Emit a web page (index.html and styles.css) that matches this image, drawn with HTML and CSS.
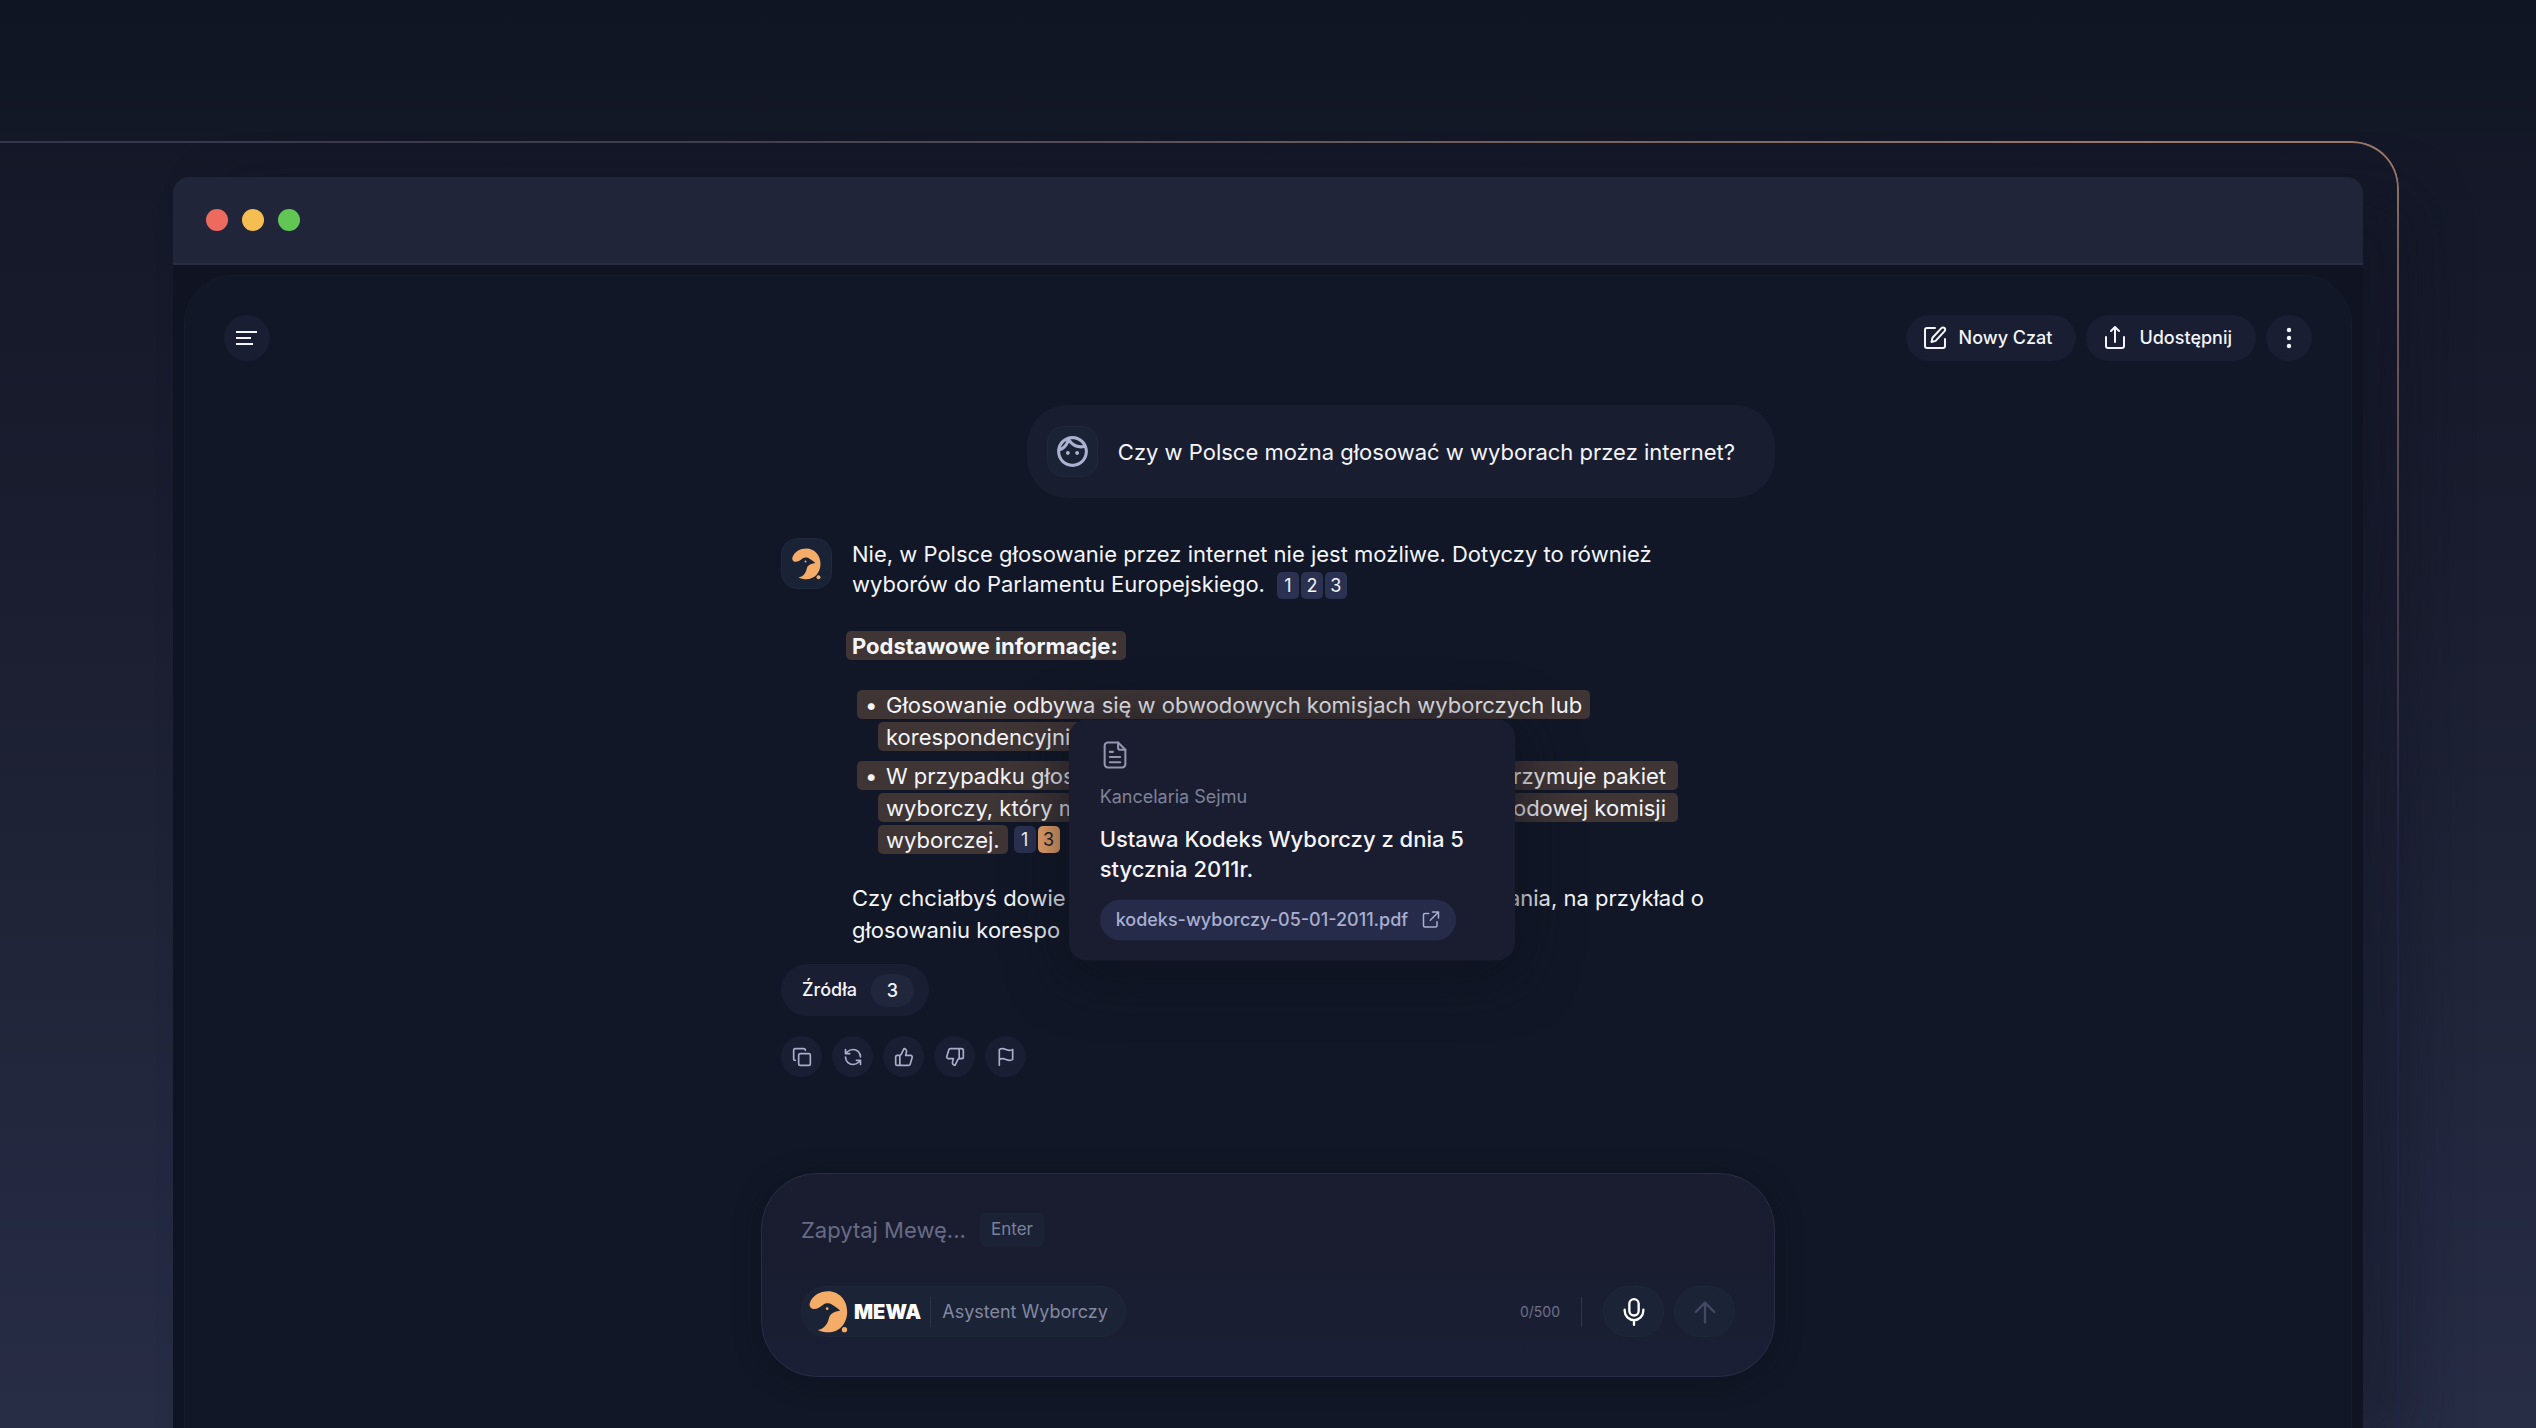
FILE: index.html
```html
<!DOCTYPE html>
<html lang="pl">
<head>
  <meta charset="UTF-8">
  <meta name="viewport" content="width=device-width, initial-scale=1">
  <title>MEWA - Asystent Wyborczy</title>
  <link rel="stylesheet" href="styles.css">
</head>
<body>

<!-- shared logo shape -->
<svg class="defs" aria-hidden="true">
  <symbol id="mewa" viewBox="148 62 116 126">
    <path d="M160 116C152 115 147 106 150 98C158 76 180 63 205 63C238 63 262 90 262 124C262 160 238 186 205 186C194 186 183 184 174 179C192 176 202 162 206 148C209 134 214 125 241 121C233 112 224 108 218 104C212 98 198 97 190 103C181 110 172 117 160 116Z"/>
    <circle cx="202" cy="115" r="4"/>
    <circle cx="254" cy="178" r="8"/>
  </symbol>
</svg>

<div class="frame"></div>

<div class="window">
  <div class="titlebar">
    <span class="dot red"></span>
    <span class="dot yellow"></span>
    <span class="dot green"></span>
  </div>

  <div class="panel">
    <header class="toolbar">
      <button class="round" aria-label="Menu">
        <svg class="menu-icon" viewBox="0 0 22 16"><path d="M0 2h21M0 8h15M0 14h17"/></svg>
      </button>
      <div class="toolbar-right">
        <button class="pill">
          <svg class="icon" viewBox="0 0 24 24"><path d="M12 2H4a2 2 0 0 0-2 2v16a2 2 0 0 0 2 2h16a2 2 0 0 0 2-2v-7"/><path d="M18.4 2.100a2.100 2.100 0 0 1 3.200 3L12.600 14.900 8.500 16l1-4.200z"/></svg>
          Nowy Czat
        </button>
        <button class="pill">
          <svg class="icon" viewBox="0 0 24 24"><path d="M3 11v9a2 2 0 0 0 2 2h14a2 2 0 0 0 2-2v-9"/><path d="M8 5l4-4 4 4M12 1v15"/></svg>
          Udostępnij
        </button>
        <button class="round" aria-label="Więcej">
          <svg class="icon filled" viewBox="0 0 24 24"><circle cx="12" cy="4" r="2.2"/><circle cx="12" cy="12" r="2.2"/><circle cx="12" cy="20" r="2.2"/></svg>
        </button>
      </div>
    </header>

    <main class="chat">
      <div class="question">
        <div class="avatar">
          <svg class="face" viewBox="0 0 24 24"><path d="M10.25 13c0 .69-.56 1.25-1.25 1.25S7.75 13.69 7.75 13s.56-1.25 1.25-1.25 1.25.56 1.25 1.25zM15 11.75c-.69 0-1.25.56-1.25 1.25s.56 1.25 1.25 1.25 1.25-.56 1.25-1.25-.56-1.25-1.25-1.25zm7 .25c0 5.52-4.48 10-10 10S2 17.52 2 12 6.48 2 12 2s10 4.48 10 10zM10.66 4.12C12.06 6.44 14.6 8 17.5 8c.46 0 .91-.05 1.34-.12C17.44 5.56 14.9 4 12 4c-.46 0-.91.05-1.34.12zM4.42 9.47c1.71-.97 3.03-2.55 3.66-4.44C6.37 6 5.05 7.58 4.42 9.47zM20 12c0-.78-.12-1.53-.33-2.24-.7.15-1.42.24-2.17.24-3.13 0-5.92-1.44-7.76-3.69C8.69 8.87 6.6 10.88 4 11.86c.01.04 0 .09 0 .14 0 4.41 3.59 8 8 8s8-3.59 8-8z"/></svg>
        </div>
        <p>Czy w Polsce można głosować w wyborach przez internet?</p>
      </div>

      <div class="answer">
        <div class="avatar">
          <svg class="bird"><use href="#mewa"/></svg>
        </div>
        <div class="answer-text">
          <p>Nie, w Polsce głosowanie przez internet nie jest możliwe. Dotyczy to również<br>
            wyborów do Parlamentu Europejskiego.<span class="refs"><button class="ref">1</button><button class="ref">2</button><button class="ref">3</button></span></p>

          <h2 class="mark">Podstawowe informacje:</h2>

          <ul>
            <li>
              <span class="mark first">Głosowanie odbywa się w obwodowych komisjach wyborczych lub</span>
              <span class="mark">korespondencyjnie.</span>
            </li>
            <li>
              <span class="mark first wide"><span>W przypadku głos</span> <span>otrzymuje pakiet</span></span>
              <span class="mark wide"><span>wyborczy, który m</span> <span>obwodowej komisji</span></span>
              <span class="last">
                <span class="mark">wyborczej.</span>
                <span class="refs">
                  <button class="ref">1</button>
                  <span class="ref-open">
                    <button class="ref active">3</button>
                    <span class="source">
                      <svg class="file-icon" viewBox="0 0 24 28"><path d="M15 2H5a3 3 0 0 0-3 3v18a3 3 0 0 0 3 3h14a3 3 0 0 0 3-3V9z"/><path d="M15 2v5a2 2 0 0 0 2 2h5M7 11h3M7 16h10M7 21h10"/></svg>
                      <span class="source-owner">Kancelaria Sejmu</span>
                      <strong>Ustawa Kodeks Wyborczy z dnia 5 stycznia 2011r.</strong>
                      <a class="source-link" href="#">kodeks-wyborczy-05-01-2011.pdf
                        <svg class="link-icon" viewBox="0 0 24 24"><path d="M14 2h8v8M22 2L11 13"/><path d="M9 4H4a2 2 0 0 0-2 2v14a2 2 0 0 0 2 2h14a2 2 0 0 0 2-2v-5"/></svg>
                      </a>
                    </span>
                  </span>
                </span>
              </span>
            </li>
          </ul>

          <p class="follow-up"><span class="wide"><span>Czy chciałbyś dowie</span> <span>głosowania, na przykład o</span></span>
            głosowaniu korespo</p>
        </div>
      </div>

      <button class="sources">Źródła <span>3</span></button>

      <div class="actions">
        <button aria-label="Kopiuj"><svg class="icon small" viewBox="0 0 24 24"><rect x="8" y="8" width="14" height="14" rx="2"/><path d="M4 16a2 2 0 0 1-2-2V4a2 2 0 0 1 2-2h10a2 2 0 0 1 2 2"/></svg></button>
        <button aria-label="Odśwież"><svg class="icon small" viewBox="0 0 24 24"><path d="M21 12a9 9 0 0 0-9-9 9.8 9.8 0 0 0-6.7 2.7L3 8M3 3v5h5M3 12a9 9 0 0 0 9 9 9.8 9.8 0 0 0 6.7-2.7L21 16M16 16h5v5"/></svg></button>
        <button aria-label="Dobra odpowiedź"><svg class="icon small" viewBox="0 0 24 24"><path d="M7 10v12M15 5.9 14 10h5.8a2 2 0 0 1 2 2.6l-2.4 8a2 2 0 0 1-1.9 1.4H4a2 2 0 0 1-2-2v-8a2 2 0 0 1 2-2h2.8a2 2 0 0 0 1.8-1.1L12 2a3.1 3.1 0 0 1 3 3.9z"/></svg></button>
        <button aria-label="Zła odpowiedź"><svg class="icon small" viewBox="0 0 24 24"><path d="M17 14V2M9 18.1 10 14H4.2a2 2 0 0 1-2-2.6l2.4-8A2 2 0 0 1 6.5 2H20a2 2 0 0 1 2 2v8a2 2 0 0 1-2 2h-2.8a2 2 0 0 0-1.8 1.1L12 22a3.1 3.1 0 0 1-3-3.9z"/></svg></button>
        <button aria-label="Zgłoś"><svg class="icon small" viewBox="0 0 24 24"><path d="M4 22V3s1-1 4-1 5 2 8 2 4-1 4-1v12s-1 1-4 1-5-2-8-2-4 1-4 1"/></svg></button>
      </div>

      <form class="composer" onsubmit="return false">
        <div class="composer-row">
          <input type="text" placeholder="Zapytaj Mewę..." aria-label="Zapytaj Mewę">
          <kbd>Enter</kbd>
        </div>
        <div class="composer-row">
          <div class="brand">
            <svg class="brand-bird"><use href="#mewa"/></svg>
            <b>MEWA</b>
            <span>Asystent Wyborczy</span>
          </div>
          <span class="counter">0/500</span>
          <button class="mic" type="button" aria-label="Dyktuj">
            <svg class="icon large" viewBox="0 0 24 24"><rect x="8" y="1" width="8" height="14" rx="4"/><path d="M4 10v1a8 8 0 0 0 16 0v-1M12 19v4"/></svg>
          </button>
          <button class="send" type="submit" aria-label="Wyślij" disabled>
            <svg class="icon large" viewBox="0 0 24 24"><path d="M12 21V4M4 12l8-8 8 8"/></svg>
          </button>
        </div>
      </form>
    </main>
  </div>
</div>

</body>
</html>
```
FILE: styles.css
```css
* {
  box-sizing: border-box;
}
body {
  font-family: Inter, "Open Sans", sans-serif;
  font-size: 22px;
  line-height: 30px;
  color: #f4f5fa;
  margin: 0;
  padding: 177px 173px 0;
  display: flex;
  flex-direction: column;
  min-height: 100vh;
  position: relative;
  overflow-x: hidden;
  background: linear-gradient(#0f1522, #141828 12%, #1a1d2f 38%, #1f2437 64%, #232840 82%, #272d45);
}
p, h2, ul {
  margin: 0;
  padding: 0;
}
button {
  font: inherit;
  color: inherit;
  border: none;
  padding: 0;
  cursor: pointer;
}
svg {
  display: block;
  flex: none;
  fill: none;
  stroke: currentColor;
  stroke-width: 2;
  stroke-linecap: round;
  stroke-linejoin: round;
}
.defs {
  position: absolute;
  width: 0;
  height: 0;
}
.icon {
  width: 24px;
  height: 24px;
}
.icon.small {
  width: 20px;
  height: 20px;
}
.icon.large {
  width: 28px;
  height: 28px;
}
.filled, .face, .bird, .brand-bird {
  fill: currentColor;
  stroke: none;
}

/* glowing line behind the window */
.frame {
  position: absolute;
  top: 141px;
  left: 0;
  right: 137px;
  bottom: 0;
  padding: 2px 2px 0 0;
  border-radius: 0 47px 0 0;
  background:
    linear-gradient(transparent 10%, #262c50 55%, #262d52),
    linear-gradient(to right, #33354a, #41404f 30%, #9c7a6b 90%);
  mask: linear-gradient(#000 0 0) content-box exclude, linear-gradient(#000 0 0);
}

.window {
  flex: 1;
  display: flex;
  flex-direction: column;
  position: relative;
  background: #101422;
  border-radius: 16px 16px 0 0;
  box-shadow: 48px 20px 60px rgba(16, 18, 32, 0.4);
}
.titlebar {
  display: flex;
  align-items: center;
  gap: 14px;
  height: 88px;
  padding-left: 33px;
  background: #202539;
  border-bottom: 2px solid #282d41;
  border-radius: 16px 16px 0 0;
}
.dot {
  width: 22px;
  height: 22px;
  border-radius: 50%;
}
.red { background: #ed6a5f; }
.yellow { background: #f6be50; }
.green { background: #62c655; }

.panel {
  flex: 1;
  margin: 10px 11px 0;
  padding: 39px 39px 51px;
  background: #111726;
  border: 1px solid #161c2b;
  border-bottom: none;
  border-radius: 50px 50px 0 0;
}
.toolbar, .toolbar-right {
  display: flex;
  justify-content: space-between;
  gap: 10px;
}
.round, .pill {
  display: flex;
  align-items: center;
  justify-content: center;
  height: 46px;
  background: #191e33;
  border-radius: 23px;
}
.round {
  width: 46px;
}
.pill {
  gap: 12px;
  padding: 0 24px 0 17px;
  font-size: 18px;
  font-weight: 500;
}
.menu-icon {
  width: 22px;
  height: 16px;
  stroke-linecap: butt;
}

.chat {
  display: flex;
  flex-direction: column;
  align-items: flex-start;
  max-width: 1014px;
  margin: 44px auto 0;
}
.avatar {
  display: flex;
  align-items: center;
  justify-content: center;
  flex: none;
  width: 51px;
  height: 51px;
  background: #1a2235;
  border: 1px solid #20283d;
  border-radius: 16px;
}
.question {
  align-self: flex-end;
  display: flex;
  align-items: center;
  gap: 20px;
  padding: 21px 40px 21px 20px;
  background: #191d30;
  border-radius: 40px;
}
.face {
  width: 37px;
  height: 37px;
  color: #aab2d0;
}
.bird {
  width: 29px;
  height: 32px;
  color: #f6ac69;
}
.answer {
  display: flex;
  gap: 20px;
  width: 100%;
  margin-top: 40px;
  padding-left: 20px;
}
.answer-text {
  width: 852px;
  padding-top: 1px;
}

/* highlighted fragments */
.mark {
  display: block;
  width: fit-content;
  height: 29px;
  line-height: 30px;
  padding: 0 8px;
  background: #3f3535;
  border-radius: 5px;
}
h2.mark {
  margin: 32px 0 30px -6px;
  padding: 0 8px 0 6px;
  font-size: 22px;
  font-weight: 700;
}
ul {
  display: flex;
  flex-direction: column;
  gap: 10px;
  list-style: none;
  padding-left: 26px;
}
li {
  display: flex;
  flex-direction: column;
  gap: 3px;
}
.mark.first {
  margin-left: -21px;
}
.mark.first::before {
  content: "•";
  display: inline-block;
  width: 21px;
}
.wide {
  display: flex;
  justify-content: space-between;
}
.mark.wide {
  width: 800px;
  padding-right: 12px;
}
.mark.first.wide {
  width: 821px;
}
.wide span:first-child {
  margin-right: auto;
}
.last {
  display: flex;
  align-items: center;
}
.refs {
  display: inline-flex;
  gap: 2px;
  margin-left: 12px;
}
.last .refs {
  margin-left: 6px;
}
.ref {
  display: block;
  width: 22px;
  height: 27px;
  font-size: 18px;
  line-height: 27px;
  background: #2b3150;
  border-radius: 5px;
}
.ref.active {
  background: #eca468;
  color: #1a1d2f;
}
.ref-open {
  position: relative;
}
.follow-up {
  margin-top: 28px;
  line-height: 32px;
}

/* source preview shown next to the active reference */
.source {
  position: absolute;
  z-index: 1;
  top: 50%;
  left: calc(100% + 9px);
  transform: translateY(-50%);
  width: 446px;
  padding: 21px 31px 20px;
  background: #191d2f;
  border-radius: 18px;
  box-shadow: 0 10px 60px rgba(14, 17, 31, 0.8);
}
.file-icon {
  width: 30px;
  height: 29px;
  color: #9496ad;
}
.source-owner {
  display: block;
  margin: 12px 0;
  font-size: 18px;
  color: #7f8298;
}
.source strong {
  display: block;
  font-weight: 500;
}
.source-link {
  display: flex;
  width: fit-content;
  align-items: center;
  gap: 14px;
  height: 41px;
  margin-top: 16px;
  padding: 0 16px;
  font-size: 18px;
  font-weight: 500;
  color: #a9afd0;
  text-decoration: none;
  background: #252b48;
  border-radius: 21px;
}
.link-icon {
  width: 18px;
  height: 18px;
}

.sources {
  display: flex;
  align-items: center;
  gap: 14px;
  height: 52px;
  margin: 18px 0 20px 20px;
  padding: 0 15px 0 21px;
  font-size: 18px;
  font-weight: 500;
  background: #191e33;
  border-radius: 26px;
}
.sources span {
  width: 43px;
  line-height: 33px;
  background: #20273c;
  border-radius: 17px;
}
.actions {
  display: flex;
  gap: 10px;
  padding-left: 20px;
}
.actions button {
  display: flex;
  align-items: center;
  justify-content: center;
  width: 41px;
  height: 41px;
  color: #a9aeca;
  background: #191e33;
  border-radius: 50%;
}

.composer {
  display: flex;
  flex-direction: column;
  gap: 40px;
  width: 100%;
  margin-top: 96px;
  padding: 39px;
  background: linear-gradient(#191d2f 40%, #1b1f36);
  border: 1px solid #282d46;
  border-radius: 56px;
  box-shadow: 0 4px 24px rgba(13, 16, 30, 0.5);
}
.composer-row {
  display: flex;
  align-items: center;
}
.composer input {
  width: 168px;
  height: 33px;
  padding: 0;
  margin-right: 11px;
  font: inherit;
  color: inherit;
  background: none;
  border: none;
  outline: none;
}
.composer input::placeholder {
  color: #686b86;
}
kbd {
  padding: 0 10px;
  font-family: inherit;
  font-size: 17px;
  line-height: 31px;
  color: #7c8199;
  background: #1b2235;
  border: 1px solid #1f263a;
  border-radius: 6px;
}
.brand {
  display: flex;
  align-items: center;
  height: 51px;
  padding: 0 17px 0 7px;
  margin-right: auto;
  background: #1b2336;
  border: 1px solid #20273b;
  border-radius: 26px;
}
.brand-bird {
  width: 39px;
  height: 42px;
  color: #f6ac69;
}
.brand b {
  margin: 0 9px 0 6px;
  font-size: 20px;
  font-weight: 900;
  color: #fff;
}
.brand span {
  padding-left: 11px;
  font-size: 18px;
  color: #8488a0;
  border-left: 1px solid #2b3146;
}
.counter {
  padding-right: 21px;
  margin-right: 21px;
  font-size: 14px;
  color: #6d7189;
  border-right: 1px solid #31364f;
}
.mic, .send {
  display: flex;
  align-items: center;
  justify-content: center;
  width: 61px;
  height: 51px;
  color: #fff;
  background: #1b2336;
  border: 1px solid #1f273a;
  border-radius: 26px;
}
.send {
  margin-left: 10px;
  color: #434964;
}
```
